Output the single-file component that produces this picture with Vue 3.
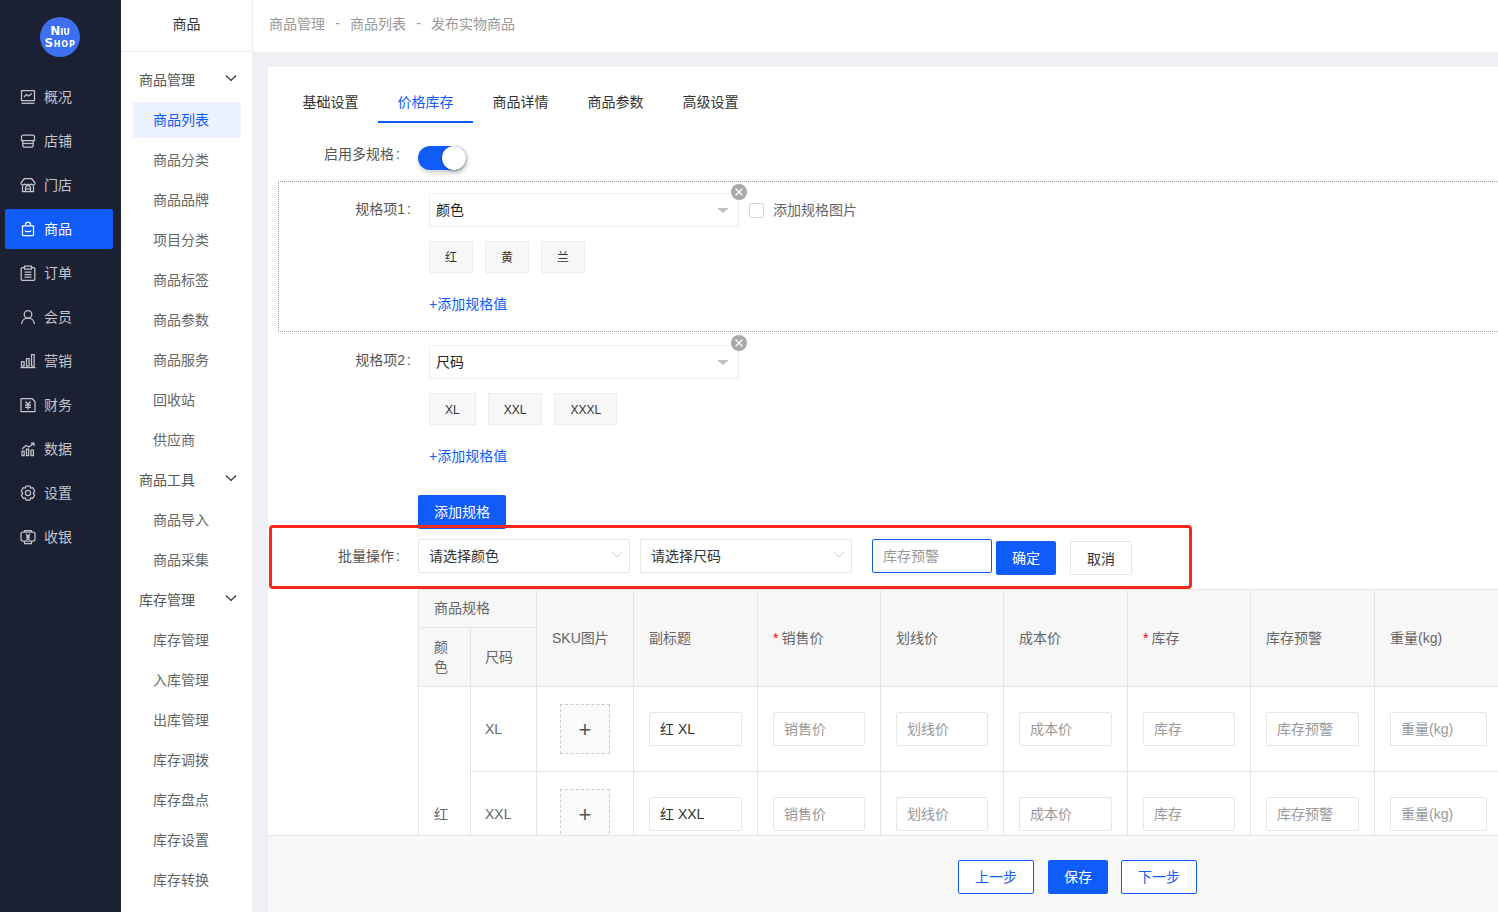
<template>
  <div class="layout">
    <aside class="nav">
      <div class="logo"><div class="logo-circle"><span>Niu</span><span class="logo-shop">Shop</span></div></div>
      <ul class="nav-list">
        <li v-for="item in navItems" :key="item.name" class="nav-item" :class="{ active: item.name === '商品' }">
          <svg class="nav-icon" viewBox="0 0 16 16" fill="none" stroke="currentColor" stroke-width="1.25" stroke-linejoin="round">
            <path v-for="d in item.paths" :key="d" :d="d" />
          </svg>
          <span class="nav-text">{{ item.name }}</span>
        </li>
      </ul>
    </aside>

    <aside class="subnav">
      <div class="subnav-title">商品</div>
      <div class="subnav-body">
        <template v-for="group in subGroups" :key="group.title">
          <div class="group-title">
            <span>{{ group.title }}</span>
            <svg class="group-arrow" viewBox="0 0 12 8" fill="none" stroke="currentColor" stroke-width="1.2"><path d="M1 1.500l5 5 5-5" /></svg>
          </div>
          <div v-for="link in group.links" :key="link" class="group-link" :class="{ active: link === '商品列表' }">{{ link }}</div>
        </template>
      </div>
    </aside>

    <main class="main">
      <div class="crumbs">
        <span>商品管理</span><i>-</i><span>商品列表</span><i>-</i><span>发布实物商品</span>
      </div>
      <div class="content">
        <div class="card">
          <div class="tabs">
            <div v-for="tab in tabs" :key="tab" class="tab" :class="{ active: tab === '价格库存' }">{{ tab }}</div>
          </div>

          <div class="form">
            <div class="switch-row">
              <label class="form-label">启用多规格<span class="colon">:</span></label>
              <div class="switch"><span class="knob"></span></div>
            </div>

            <div v-for="(spec, idx) in specs" :key="spec.name" class="spec" :class="{ dotted: idx === 0 }">
              <div class="spec-head">
                <label class="spec-label">规格项{{ idx + 1 }}<span class="colon">:</span></label>
                <div class="spec-select">
                  <span>{{ spec.name }}</span>
                  <b class="caret"></b>
                  <em class="remove">
                    <svg viewBox="0 0 16 16" fill="none" stroke="#fff" stroke-width="1.3"><path d="M4.500 4.500l7 7M11.500 4.500l-7 7" /></svg>
                  </em>
                </div>
                <template v-if="idx === 0">
                  <span class="check"></span>
                  <span class="check-text">添加规格图片</span>
                </template>
              </div>
              <div class="spec-tags">
                <span v-for="val in spec.values" :key="val" class="spec-tag" :class="{ latin: idx === 1 }">{{ val }}</span>
              </div>
              <a class="add-value">+添加规格值</a>
            </div>

            <button class="btn-primary add-spec">添加规格</button>

            <div class="batch">
              <label class="form-label">批量操作<span class="colon">:</span></label>
              <div class="batch-select">
                <span>请选择颜色</span>
                <svg viewBox="0 0 12 8" fill="none" stroke="#ccc" stroke-width="1"><path d="M1 1l5 5 5-5" /></svg>
              </div>
              <div class="batch-select">
                <span>请选择尺码</span>
                <svg viewBox="0 0 12 8" fill="none" stroke="#ccc" stroke-width="1"><path d="M1 1l5 5 5-5" /></svg>
              </div>
              <input class="batch-input" placeholder="库存预警" />
              <button class="btn-primary batch-ok">确定</button>
              <button class="batch-cancel">取消</button>
              <div class="highlight"></div>
            </div>

            <table class="sku">
              <colgroup>
                <col v-for="w in colWidths" :key="w.id" :style="{ width: w.px + 'px' }" />
              </colgroup>
              <thead>
                <tr class="head-one">
                  <th colspan="2" class="group-cell">商品规格</th>
                  <th v-for="col in columns" :key="col.name" rowspan="2">
                    <span v-if="col.required" class="star">*</span>{{ col.name }}
                  </th>
                </tr>
                <tr class="head-two">
                  <th>颜色</th>
                  <th class="size-cell">尺码</th>
                </tr>
              </thead>
              <tbody>
                <tr v-for="(size, i) in sizes" :key="size">
                  <td v-if="i === 0" rowspan="3" class="color-cell">红</td>
                  <td class="size-cell">{{ size }}</td>
                  <td class="upload-cell"><div class="upload">+</div></td>
                  <td><input class="cell-input title-input" :value="'红 ' + size" /></td>
                  <td v-for="f in fields" :key="f.name">
                    <input class="cell-input" :style="{ width: f.w + 'px' }" :placeholder="f.name" />
                  </td>
                </tr>
                <tr><td colspan="9"></td></tr>
              </tbody>
            </table>
          </div>
        </div>
      </div>
      <div class="footer">
        <button class="btn-outline">上一步</button>
        <button class="btn-primary btn-save">保存</button>
        <button class="btn-outline btn-next">下一步</button>
      </div>
    </main>
  </div>
</template>

<script setup>
const navItems = [
  { name: '概况', paths: ['M1.500 1.500h13v10h-13z', 'M1.500 14.300h13', 'M4 8l2.500-2.500 2 1.500L12 4.500'] },
  { name: '店铺', paths: ['M3.500 2h9a2 2 0 0 1 2 2v3.500h-13V4a2 2 0 0 1 2-2z', 'M2.800 7.500v5a1.500 1.500 0 0 0 1.500 1.500h7.400a1.500 1.500 0 0 0 1.500-1.500v-5', 'M2.800 10.500h10.400'] },
  { name: '门店', paths: ['M4.500 1.500h7l3.500 4.300a2 2 0 0 1-3.700 1.200A2.600 2.600 0 0 1 8 7.200 2.600 2.600 0 0 1 4.700 7 2 2 0 0 1 1 5.800z', 'M2.500 8.500v6h11v-6', 'M5.500 14.500V11a2.500 2.500 0 0 1 5 0v3.500', 'M5.500 12h5'] },
  { name: '商品', paths: ['M2.500 4.800h11v8.700a1 1 0 0 1-1 1h-9a1 1 0 0 1-1-1z', 'M5.500 4.800V3.500a2.500 2.500 0 0 1 5 0v1.300', 'M5 9.500c.8 1.600 5.200 1.600 6 0'] },
  { name: '订单', paths: ['M4.500 2.500H2.200a1 1 0 0 0-1 1v10.800a1 1 0 0 0 1 1h11.600a1 1 0 0 0 1-1V3.500a1 1 0 0 0-1-1h-2.300', 'M4.500 1h7v3h-7z', 'M4.500 7h7M4.500 9.500h7M4.500 12h7'] },
  { name: '会员', paths: ['M8 1.500a3.800 3.800 0 1 1 0 7.600 3.800 3.800 0 0 1 0-7.600z', 'M1.500 15c.4-3.400 3-5.900 6.500-5.900s6.100 2.500 6.500 5.900'] },
  { name: '营销', paths: ['M.500 14.600h15', 'M1.500 8.500h2.600v4.500H1.500z', 'M6.500 5.500h2.600v7.500H6.500z', 'M11.500 1.500h2.600v11.500h-2.600z'] },
  { name: '财务', paths: ['M1 1.500h11l3 3v10H1z', 'M5.500 4.500L8 7.500l2.500-3', 'M8 7.500v5M5 8.200h6M5 10.300h6'] },
  { name: '数据', paths: ['M2 10h2.200v4.500H2zM6.500 8h2.200v6.500H6.500zM11 9h2.400v5.500H11z', 'M2 8l4-3.500 3 1.500L14 2', 'M11 2h3v3'] },
  { name: '设置', paths: ['M6 1h4l.6 2.100 2.100-.5 2 3.400L13.200 8l1.500 2-2 3.400-2.100-.5L10 15H6l-.6-2.100-2.100.5-2-3.400L2.800 8 1.300 6l2-3.400 2.100.5z', 'M8 5.400a2.600 2.600 0 1 1 0 5.200 2.600 2.600 0 0 1 0-5.200z'] },
  { name: '收银', paths: ['M3 3h10a2 2 0 0 1 2 2v5a2 2 0 0 1-2 2H3a2 2 0 0 1-2-2V5a2 2 0 0 1 2-2z', 'M4.500 3V1.500h7V3M4.500 12v2.500h7V12', 'M6 5l2 2.500L10 5M8 7.500v3M6 8h4M6 10h4'] },
]

const subGroups = [
  { title: '商品管理', links: ['商品列表', '商品分类', '商品品牌', '项目分类', '商品标签', '商品参数', '商品服务', '回收站', '供应商'] },
  { title: '商品工具', links: ['商品导入', '商品采集'] },
  { title: '库存管理', links: ['库存管理 ', '入库管理', '出库管理', '库存调拨', '库存盘点', '库存设置', '库存转换'] },
]

const tabs = ['基础设置', '价格库存', '商品详情', '商品参数', '高级设置']

const specs = [
  { name: '颜色', values: ['红', '黄', '兰'] },
  { name: '尺码', values: ['XL', 'XXL', 'XXXL'] },
]

const colWidths = [52, 66, 97, 124, 123, 123, 124, 123, 124, 130].map((px, id) => ({ id, px }))

const columns = [
  { name: 'SKU图片' },
  { name: '副标题' },
  { name: '销售价', required: true },
  { name: '划线价' },
  { name: '成本价' },
  { name: '库存', required: true },
  { name: '库存预警' },
  { name: '重量(kg)' },
]

const fields = [
  { name: '销售价', w: 92 },
  { name: '划线价', w: 92 },
  { name: '成本价', w: 93 },
  { name: '库存', w: 92 },
  { name: '库存预警', w: 93 },
  { name: '重量(kg)', w: 97 },
]

const sizes = ['XL', 'XXL']
</script>

<style>
html,
body {
  margin: 0;
  overflow: hidden;
}
</style>

<style scoped>
.layout {
  display: flex;
  height: 912px;
  overflow: hidden;
  font-family: "Liberation Sans", "Noto Sans CJK SC", sans-serif;
  font-size: 14px;
  color: #333;
  background: #eff0f4;
}

/* first column */
.nav {
  width: 121px;
  flex: none;
  background: #1b2033;
}
.logo {
  height: 75px;
  padding-top: 17px;
  box-sizing: border-box;
}
.logo-circle {
  width: 40px;
  height: 40px;
  margin-left: 40px;
  border-radius: 50%;
  background: #3c70f0;
  color: #fff;
  font-family: "DejaVu Sans", sans-serif;
  font-weight: 700;
  font-variant: small-caps;
  font-size: 12px;
  line-height: 12px;
  display: flex;
  flex-direction: column;
  align-items: center;
  justify-content: center;
}
.logo-shop {
  letter-spacing: 0.8px;
}
.nav-list {
  list-style: none;
  margin: 0;
  padding: 2px 8px 0 5px;
  display: flex;
  flex-direction: column;
  gap: 4px;
}
.nav-item {
  height: 40px;
  padding-left: 15px;
  display: flex;
  align-items: center;
  gap: 8px;
  color: #c4c6cc;
  border-radius: 2px;
}
.nav-item.active {
  background: #105cfb;
  color: #fff;
}
.nav-text {
  margin-top: -2px;
}
.nav-icon {
  width: 16px;
  height: 16px;
}

/* second column */
.subnav {
  width: 132px;
  flex: none;
  background: #fff;
  border-right: 1px solid #eee;
  box-sizing: border-box;
}
.subnav-title {
  height: 52px;
  line-height: 48px;
  text-align: center;
  border-bottom: 1px solid #eee;
  box-sizing: border-box;
  color: #333;
}
.subnav-body {
  padding-top: 8px;
  display: flex;
  flex-direction: column;
}
.group-title {
  height: 40px;
  padding: 0 15px 2px 18px;
  box-sizing: border-box;
  display: flex;
  align-items: center;
  justify-content: space-between;
  color: #555;
}
.group-arrow {
  width: 12px;
  height: 8px;
  color: #333;
  margin-top: -2px;
}
.group-link {
  height: 36px;
  line-height: 36px;
  margin: 2px 11px 2px 12px;
  padding-left: 20px;
  color: #666;
  border-radius: 2px;
}
.group-link.active {
  background: #ebf1fe;
  color: #105cfb;
}

/* right part */
.main {
  flex: 1;
  min-width: 0;
  display: flex;
  flex-direction: column;
}
.crumbs {
  height: 52px;
  flex: none;
  background: #fff;
  padding-left: 16px;
  display: flex;
  align-items: center;
  padding-bottom: 6px;
  box-sizing: border-box;
  color: #999;
}
.crumbs i {
  font-style: normal;
  width: 25px;
  text-align: center;
}
.content {
  flex: 1;
  min-height: 0;
  overflow: hidden;
  padding: 15px 0 0 15px;
}
.card {
  width: 1619px;
  background: #fff;
  padding-top: 15px;
  padding-bottom: 40px;
}
.tabs {
  display: flex;
  margin-left: 15px;
}
.tab {
  width: 95px;
  height: 41px;
  box-sizing: border-box;
  line-height: 41px;
  text-align: center;
  border-bottom: 2px solid transparent;
  color: #333;
}
.tab.active {
  color: #105cfb;
  border-bottom-color: #105cfb;
}
.form {
  padding-left: 10px;
}
.form-label {
  width: 122px;
  margin-right: 18px;
  flex: none;
  text-align: right;
  color: #555;
}
.colon {
  margin-left: 2px;
}
.switch-row {
  display: flex;
  margin-top: 23px;
  margin-bottom: 11px;
  line-height: 16px;
}
.switch {
  width: 48px;
  height: 24px;
  border-radius: 12px;
  background: #105cfb;
  position: relative;
  box-shadow: 1px 3px 5px rgba(0, 0, 0, 0.2);
}
.knob {
  position: absolute;
  right: 0;
  top: 0;
  width: 24px;
  height: 24px;
  border-radius: 50%;
  background: #fff;
  box-shadow: 0 1px 3px rgba(0, 0, 0, 0.4);
}
.spec {
  border: 1px solid transparent;
  padding: 11px 0 17px;
}
.spec.dotted {
  border: 1px dotted #999;
}
.spec + .spec {
  margin-top: 1px;
}
.spec-head {
  display: flex;
  align-items: center;
}
.spec-label {
  width: 132px;
  margin-right: 18px;
  flex: none;
  text-align: right;
  color: #555;
  margin-top: -5px;
}
.spec + .spec .spec-label {
  margin-top: -7px;
}
.spec-select {
  width: 310px;
  height: 34px;
  box-sizing: border-box;
  border: 1px solid #eee;
  padding: 0 0 2px 6px;
  display: flex;
  align-items: center;
  position: relative;
  color: #222;
}
.caret {
  position: absolute;
  right: 9px;
  top: 14px;
  border-style: solid;
  border-width: 5px 6px 0;
  border-color: #c2c2c2 transparent transparent;
}
.remove {
  position: absolute;
  right: -9px;
  top: -10px;
  width: 16px;
  height: 16px;
  border-radius: 50%;
  background: #a8a8a8;
}
.spec + .spec .remove {
  top: -11px;
}
.remove svg {
  display: block;
}
.check {
  width: 13px;
  height: 13px;
  margin-left: 10px;
  border: 1px solid #d6d6d6;
  border-radius: 2px;
}
.check-text {
  margin: -2px 0 0 9px;
  color: #666;
}
.spec-tags {
  display: flex;
  gap: 12px;
  margin: 14px 0 0 150px;
}
.spec-tag {
  min-width: 44px;
  height: 32px;
  line-height: 32px;
  box-sizing: border-box;
  text-align: center;
  font-size: 12px;
  background: #f7f7f7;
  border: 1px solid #eee;
}
.spec-tag.latin {
  min-width: 0;
  padding: 0 15px;
}
.add-value {
  display: block;
  margin: 21px 0 0 150px;
  line-height: 20px;
  color: #105cfb;
}
.btn-primary {
  border: 0;
  border-radius: 2px;
  background: #105cfb;
  color: #fff;
  font: inherit;
  padding: 0 0 2px;
}
.add-spec {
  display: block;
  width: 88px;
  height: 34px;
  margin: 11px 0 0 140px;
}
.batch {
  position: relative;
  display: flex;
  margin-top: 10px;
  height: 36px;
}
.batch .form-label {
  line-height: 34px;
}
.batch-select {
  width: 212px;
  height: 34px;
  box-sizing: border-box;
  border: 1px solid #e6e6e6;
  border-radius: 2px;
  margin-right: 10px;
  padding: 0 11px 2px 10px;
  display: flex;
  align-items: center;
  justify-content: space-between;
  color: #333;
}
.batch-select svg {
  width: 12px;
  height: 8px;
  margin-right: -5px;
}
.batch-select:nth-of-type(2) {
  margin-right: 20px;
}
.batch-input {
  width: 120px;
  height: 34px;
  box-sizing: border-box;
  border: 1px solid #105cfb;
  border-radius: 2px;
  padding: 0 10px;
  font: inherit;
  outline: none;
}
.batch-input::placeholder,
.cell-input::placeholder {
  color: #999;
}
.batch-ok {
  width: 60px;
  height: 34px;
  margin: 2px 14px 0 4px;
}
.batch-cancel {
  width: 62px;
  height: 34px;
  margin-top: 2px;
  background: #fff;
  border: 1px solid #e6e6e6;
  border-radius: 2px;
  font: inherit;
  color: #333;
}
.highlight {
  position: absolute;
  left: -9px;
  top: -14px;
  width: 923px;
  height: 64px;
  box-sizing: border-box;
  border: 3px solid #f5281c;
  border-radius: 4px;
  pointer-events: none;
}
.sku {
  table-layout: fixed;
  width: 1086px;
  margin: 14px 0 0 140px;
  border-collapse: collapse;
}
.sku th,
.sku td {
  border: 1px solid #e5e5e5;
  padding: 0 15px;
  text-align: left;
  font-weight: 400;
}
.sku th {
  background: #f7f7f7;
  color: #666;
  line-height: 20px;
}
.sku .group-cell {
  padding-bottom: 2px;
}
.sku .color-cell {
  padding-bottom: 2px;
}
.sku .size-cell {
  padding-left: 14px;
}
.head-one {
  height: 38px;
}
.head-two {
  height: 59px;
}
.sku tbody tr {
  height: 85px;
}
.sku td {
  color: #666;
}
.star {
  color: #f00;
  margin-right: 3px;
}
.sku .upload-cell {
  padding: 0 8px;
}
.upload {
  width: 50px;
  height: 50px;
  margin: 0 auto;
  box-sizing: border-box;
  border: 1px dashed #ccc;
  background: #fafafa;
  color: #555;
  font-size: 22px;
  line-height: 50px;
  text-align: center;
}
.cell-input {
  width: 93px;
  height: 34px;
  box-sizing: border-box;
  border: 1px solid #e6e6e6;
  border-radius: 2px;
  padding: 0 10px;
  font: inherit;
  color: #333;
  outline: none;
  display: block;
}
.title-input {
  padding-bottom: 2px;
}
.footer {
  height: 77px;
  flex: none;
  box-sizing: border-box;
  margin-left: 15px;
  background: #f8f8f8;
  border-top: 1px solid #e5e5e5;
  padding: 24px 0 0 690px;
  display: flex;
  gap: 14px;
  align-items: flex-start;
}
.btn-outline {
  width: 76px;
  height: 34px;
  background: #fff;
  border: 1px solid #105cfb;
  border-radius: 2px;
  color: #105cfb;
  font: inherit;
  padding: 0 0 2px;
}
.btn-next {
  margin-left: -1px;
}
.btn-save {
  width: 60px;
  height: 34px;
}
</style>
